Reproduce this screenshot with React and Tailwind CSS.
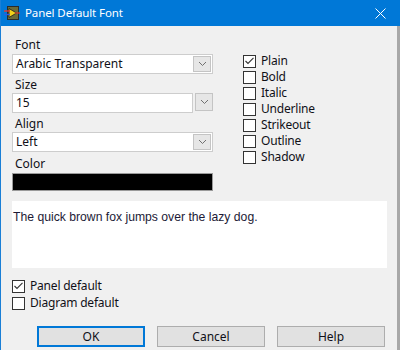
import React from 'react';

const ui = "font-['Noto_Sans',sans-serif] text-[12px] leading-[16px] text-[#101018]";

const Chevron = () => (
    <svg width="9" height="6" viewBox="0 0 9 6" className="block">
        <path d="M1 1 L4.5 4.5 L8 1" fill="none" stroke="#707070" strokeWidth="1" />
    </svg>
);

const DropButton = ({ className = '' }) => (
    <span className={`flex items-center justify-center bg-[#e6e6e6] border border-[#c4c4c4] ${className}`}>
        <Chevron />
    </span>
);

const Check = ({ checked }) => (
    <span className="w-[13px] h-[13px] shrink-0 border border-[#333] bg-white flex items-center justify-center">
        {checked && (
            <svg width="9" height="8" viewBox="0 0 9 8">
                <path d="M0.5 4 L3 6.5 L8.5 0.8" fill="none" stroke="#333" strokeWidth="1.1" />
            </svg>
        )}
    </span>
);

const CheckRow = ({ label, checked, className = '' }) => (
    <div className={`flex items-center gap-[5px] h-[16px] ${className}`}>
        <Check checked={checked} />
        <span className={`${ui} tracking-[-0.2px]`}>{label}</span>
    </div>
);

const Select = ({ value }) => (
    <div className="h-[20px] bg-white border border-[#cdcdcd] flex items-center justify-between pl-[3px] pr-[1px]">
        <span className={ui}>{value}</span>
        <DropButton className="w-[18px] h-[16px]" />
    </div>
);

const Button = ({ children, primary }) => (
    <button
        className={`w-[108px] h-[21px] bg-[#e1e1e1] ${ui} ${primary ? 'border-2 border-[#0078d7]' : 'border border-[#adadad]'}`}
    >
        {children}
    </button>
);

const AppIcon = () => (
    <svg width="16" height="16" viewBox="0 0 16 16" className="block">
        <rect x="3" y="1" width="12" height="14" fill="#2b2b2b" />
        <rect x="4" y="2" width="10" height="12" fill="#6b6b3a" />
        <path d="M5 3.5 L12.5 8 L5 12.5 Z" fill="#f2d21b" stroke="#1b1b1b" strokeWidth="0.8" />
        <path d="M0 6 H6" stroke="#e23a2e" strokeWidth="1.4" />
        <path d="M0 9.5 H6" stroke="#2a5de0" strokeWidth="1.4" />
        <path d="M11 8 H16" stroke="#e23a2e" strokeWidth="1.2" />
    </svg>
);

export default function App() {
    const styles = ['Plain', 'Bold', 'Italic', 'Underline', 'Strikeout', 'Outline', 'Shadow'];

    return (
        <div className="w-[400px] h-[350px] bg-[#f0f0f0] border-l border-[#1a7fd6] flex flex-col overflow-hidden">
            <div className="h-[26px] bg-[#0078d7] flex items-center shrink-0 -ml-px">
                <span className="ml-[4px] mr-[5px]">
                    <AppIcon />
                </span>
                <span className="font-['Noto_Sans',sans-serif] text-[11.5px] tracking-[-0.1px] text-white">Panel Default Font</span>
                <svg width="11" height="11" viewBox="0 0 11 11" className="ml-auto mr-[14px]">
                    <path d="M0.5 0.5 L10.5 10.5 M10.5 0.5 L0.5 10.5" stroke="white" strokeWidth="1" />
                </svg>
            </div>

            <div className="flex-1 flex">
                <div className="flex-1 flex flex-col pl-[11px] pt-[11px]">
                    <div className="flex">
                        <div className="w-[201px] flex flex-col">
                            <div className={`${ui} pl-[3px] h-[17px]`}>Font</div>
                            <Select value="Arabic Transparent" />
                            <div className={`${ui} pl-[3px] h-[16px] mt-[3px]`}>Size</div>
                            <div className="flex items-start gap-[2px] h-[20px]">
                                <div className="w-[181px] h-[20px] bg-white border border-[#cdcdcd] pl-[3px] flex items-center">
                                    <span className={ui}>15</span>
                                </div>
                                <DropButton className="w-[18px] h-[18px]" />
                            </div>
                            <div className={`${ui} pl-[3px] h-[16px] mt-[3px]`}>Align</div>
                            <Select value="Left" />
                            <div className={`${ui} pl-[3px] h-[16px] mt-[4px]`}>Color</div>
                            <div className="h-[18px] bg-black border border-[#9a9a9a] mt-[1px]" />
                        </div>
                        <div className="ml-[30px] pt-[16px] flex flex-col">
                            {styles.map((s, i) => (
                                <CheckRow key={s} label={s} checked={i === 0} />
                            ))}
                        </div>
                    </div>

                    <div className="mt-[10px] w-[375px] h-[67px] bg-white pl-[1px] pt-[2px]">
                        <span className="font-['Liberation_Sans',sans-serif] text-[12.2px] leading-[14px] text-[#1c1a36]">
                            The quick brown fox jumps over the lazy dog.
                        </span>
                    </div>

                    <div className="mt-[10px] flex flex-col gap-[1px]">
                        <CheckRow label="Panel default" checked />
                        <CheckRow label="Diagram default" />
                    </div>

                    <div className="mt-[15px] flex gap-[12px] pl-[25px]">
                        <Button primary>OK</Button>
                        <Button>Cancel</Button>
                        <Button>Help</Button>
                    </div>
                </div>
                <div className="w-[3px] bg-[#a8a8a8]" />
            </div>
        </div>
    );
}
